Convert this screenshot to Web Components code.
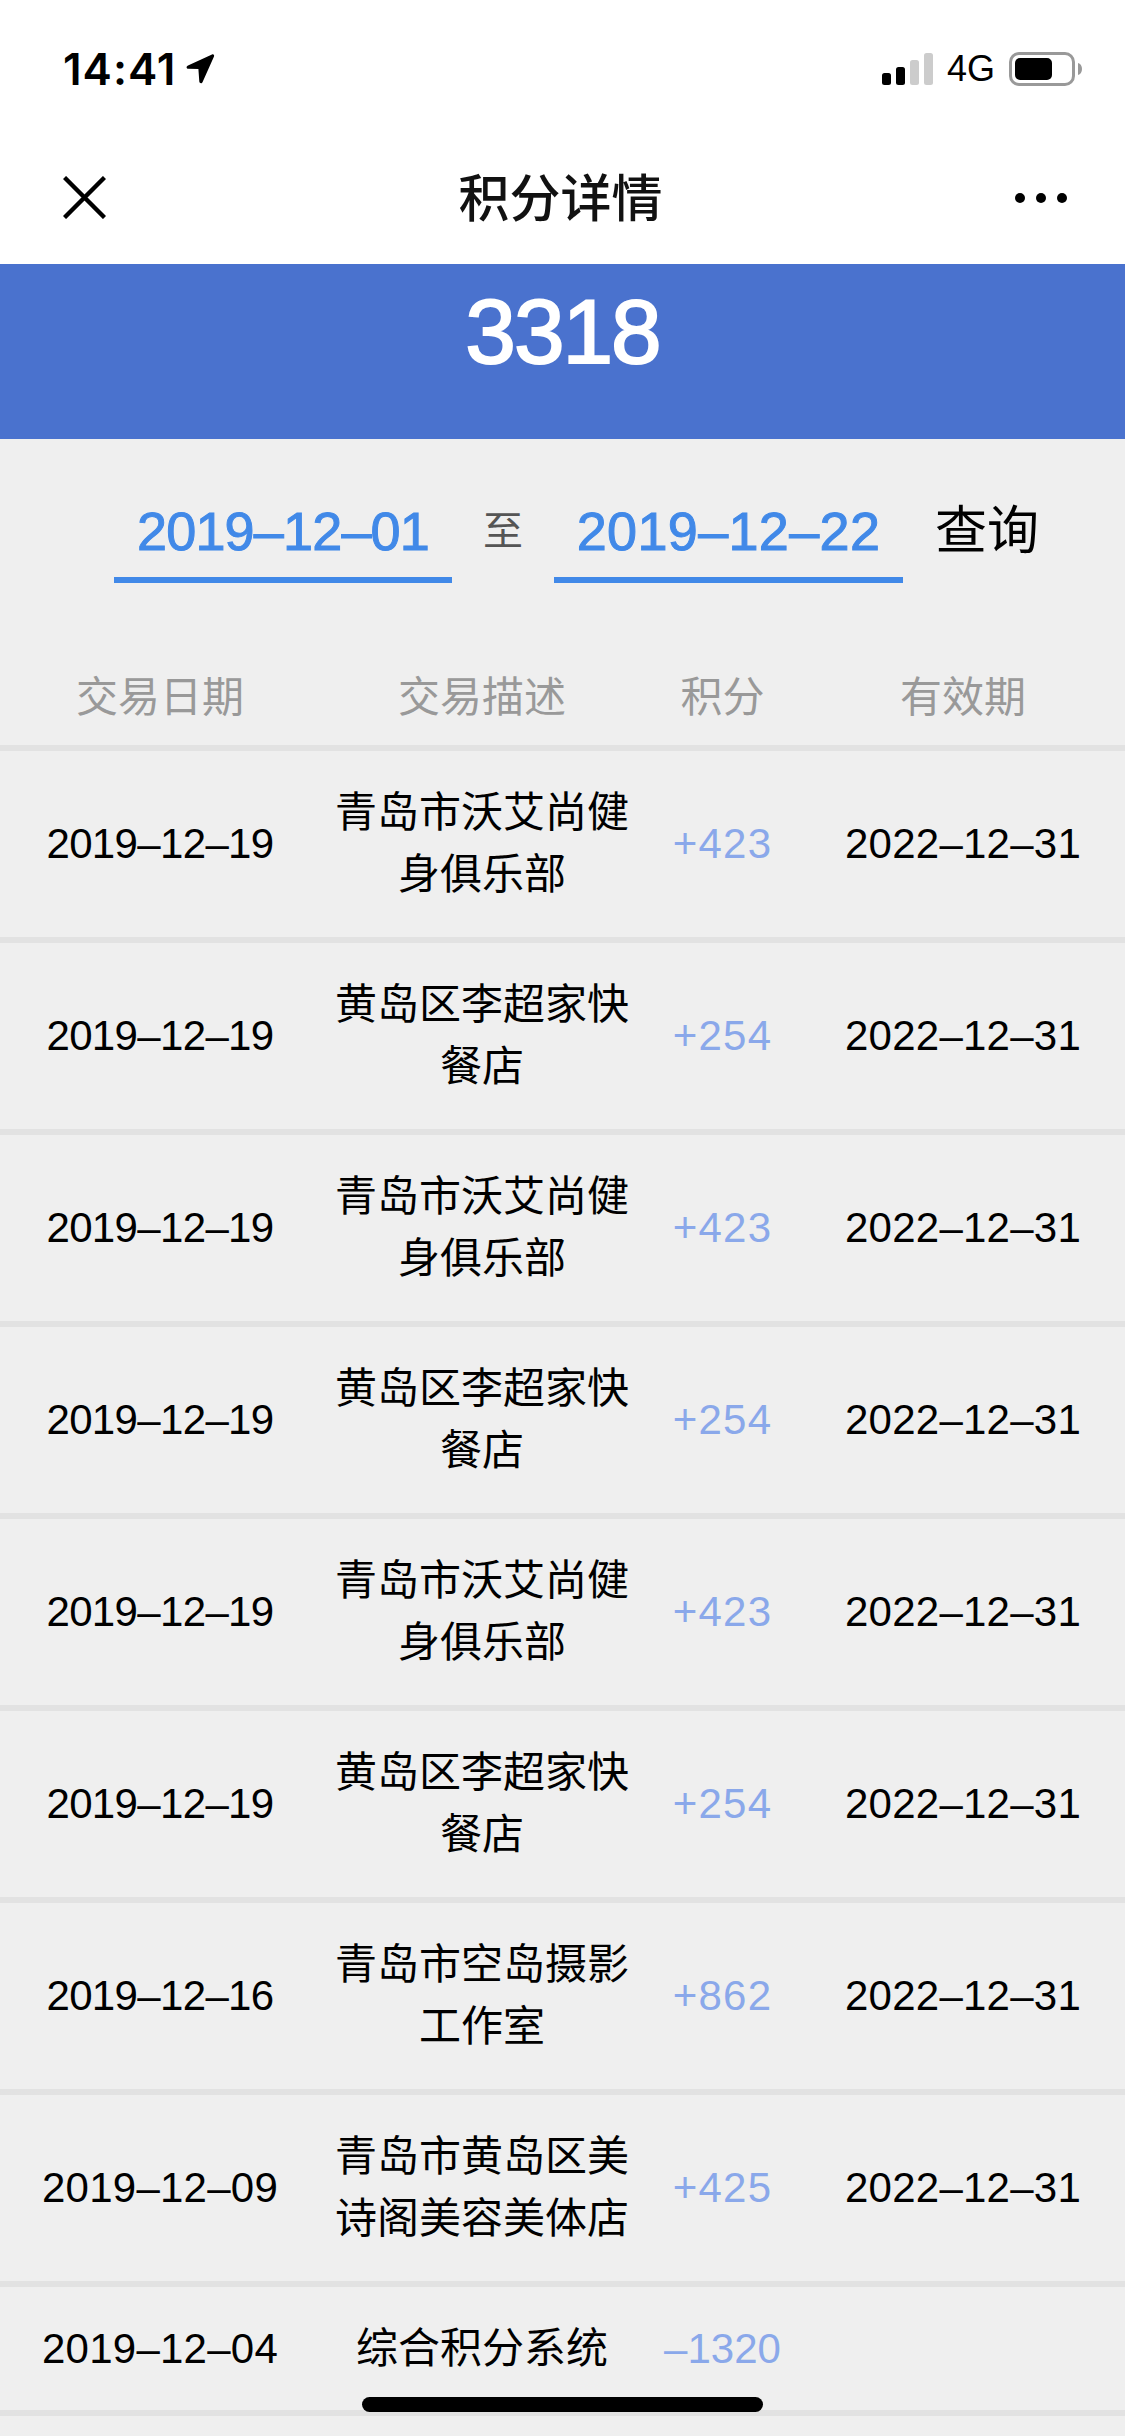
<!DOCTYPE html>
<html lang="zh-CN">
<head>
<meta charset="utf-8">
<title>积分详情</title>
<style>
  html, body { margin: 0; padding: 0; }
  body {
    width: 1125px; height: 2436px; overflow: hidden; position: relative;
    background: #efefef; color: #000;
    font-family: "Liberation Sans", "Noto Sans CJK SC", sans-serif;
  }
</style>
</head>
<body>
<points-page>
  <status-bar time="14:41"></status-bar>
  <nav-bar>积分详情</nav-bar>
  <points-balance>3318</points-balance>
  <date-filter from="2019–12–01" to="2019–12–22"></date-filter>
  <points-header></points-header>
  <points-row date="2019–12–19" desc="青岛市沃艾尚健身俱乐部" value="+423" expiry="2022–12–31"></points-row>
  <points-row date="2019–12–19" desc="黄岛区李超家快餐店" value="+254" expiry="2022–12–31"></points-row>
  <points-row date="2019–12–19" desc="青岛市沃艾尚健身俱乐部" value="+423" expiry="2022–12–31"></points-row>
  <points-row date="2019–12–19" desc="黄岛区李超家快餐店" value="+254" expiry="2022–12–31"></points-row>
  <points-row date="2019–12–19" desc="青岛市沃艾尚健身俱乐部" value="+423" expiry="2022–12–31"></points-row>
  <points-row date="2019–12–19" desc="黄岛区李超家快餐店" value="+254" expiry="2022–12–31"></points-row>
  <points-row date="2019–12–16" desc="青岛市空岛摄影工作室" value="+862" expiry="2022–12–31"></points-row>
  <points-row date="2019–12–09" desc="青岛市黄岛区美诗阁美容美体店" value="+425" expiry="2022–12–31"></points-row>
  <points-row class="short" date="2019–12–04" desc="综合积分系统" value="–1320" expiry=""></points-row>
  <home-indicator></home-indicator>
</points-page>

<script>
  // Small helper: every element gets an open shadow root from a markup string.
  function shell(host, html) {
    host.attachShadow({ mode: 'open' }).innerHTML = html;
    return host.shadowRoot;
  }

  function dateTracking(text, fontSize) {
    const ones = text.split('1').length - 1;
    const wanted = (254 - 9 * ones) * fontSize / 42;
    const natural = 0.556 * 10 * fontSize;
    return ((wanted - natural) / 10).toFixed(2) + 'px';
  }

  customElements.define('points-page', class extends HTMLElement {
    constructor() {
      super();
      shell(this, `<style>:host{display:flex;flex-direction:column;width:1125px}</style><slot></slot>`);
    }
  });

  customElements.define('status-bar', class extends HTMLElement {
    connectedCallback() {
      if (this.shadowRoot) return;
      shell(this, `<style>
        :host{display:flex;align-items:center;justify-content:space-between;box-sizing:border-box;
          height:98px;padding:39px 43px 0 63px;background:#fff}
        .l,.r{display:flex;align-items:center}
        .t{font:600 44px/50px Inter,"Liberation Sans",sans-serif;letter-spacing:1px}
        .l svg{margin-left:9px}
        .g{font:400 36px/40px "Liberation Sans",sans-serif;margin:0 14px}
      </style>
      <div class="l"><span class="t">${this.getAttribute('time')}</span>
        <svg width="30" height="31" viewBox="0 0 30 31"><path d="M27 1.5 3 12.5c-2.2 1-1.6 3.2.4 3.3l10 .3.9 12.4c.2 2 2.6 2.4 3.3.5L29 3.600c.6-1.600-.6-2.800-2-2.100Z" fill="#000"/></svg>
      </div>
      <div class="r">
        <svg width="51" height="32" viewBox="0 0 51 32">
          <rect x="0" y="20" width="9" height="12" rx="2.500" fill="#000"/>
          <rect x="14" y="14" width="9" height="18" rx="2.500" fill="#000"/>
          <rect x="28" y="7" width="9" height="25" rx="2.500" fill="#ccc"/>
          <rect x="42" y="0" width="9" height="32" rx="2.500" fill="#ccc"/>
        </svg>
        <span class="g">4G</span>
        <svg width="73" height="34" viewBox="0 0 73 34">
          <rect x="1.500" y="1.500" width="63" height="31" rx="8.500" fill="#fff" stroke="#999" stroke-width="3"/>
          <rect x="6" y="6" width="37" height="22" rx="5" fill="#000"/>
          <path d="M69 11c2.500.6 4 3 4 6s-1.500 5.400-4 6Z" fill="#999"/>
        </svg>
      </div>`);
    }
  });

  customElements.define('nav-bar', class extends HTMLElement {
    constructor() {
      super();
      shell(this, `<style>
        :host{display:flex;align-items:center;justify-content:space-between;box-sizing:border-box;
          height:166px;padding:32px 58px 0 63px;background:#fff}
        .title{font-size:51px;font-weight:500;color:#111;font-family:"Noto Sans CJK SC",sans-serif;line-height:66px;margin-top:-5px}
        svg{display:block}
        .more{margin-top:2px}
      </style>
      <svg width="43" height="43" viewBox="0 0 43 43"><path d="M1.500 1.500 41.500 41.500M41.500 1.500 1.500 41.500" stroke="#000" stroke-width="4.400" fill="none"/></svg>
      <span class="title"><slot></slot></span>
      <svg class="more" width="52" height="10" viewBox="0 0 52 10"><circle cx="5" cy="5" r="5"/><circle cx="26" cy="5" r="5"/><circle cx="47" cy="5" r="5"/></svg>`);
    }
  });

  customElements.define('points-balance', class extends HTMLElement {
    constructor() {
      super();
      shell(this, `<style>
        :host{display:flex;justify-content:center;box-sizing:border-box;height:175px;background:#4a72ce;color:#fff;
          font:400 91px/136px "Liberation Sans",sans-serif;letter-spacing:-2px;-webkit-text-stroke:2px #fff}
      </style><slot></slot>`);
    }
  });

  customElements.define('date-filter', class extends HTMLElement {
    connectedCallback() {
      if (this.shadowRoot) return;
      const from = this.getAttribute('from'), to = this.getAttribute('to');
      shell(this, `<style>
        :host{display:flex;align-items:flex-start;box-sizing:border-box;height:144px;padding:50px 0 0 114px}
        .f{box-sizing:border-box;height:94px;border-bottom:6px solid #4189e8;color:#4189e8;text-align:center;
          font-size:54px;line-height:84px;-webkit-text-stroke:1px #4189e8}
        .a{width:338px}
        .b{width:349px}
        .to{width:102px;text-align:center;font-size:40px;line-height:84px;color:#555}
        .go{margin-left:32px;font-size:52px;line-height:84px;color:#000}
      </style>
      <span class="f a" style="letter-spacing:${dateTracking(from, 54)}">${from}</span>
      <span class="to">至</span>
      <span class="f b" style="letter-spacing:${dateTracking(to, 54)}">${to}</span>
      <span class="go">查询</span>`);
    }
  });

  // Column widths are shared by the header and the record rows.
  const columns = 'grid-template-columns:320px 324px 157px 324px';

  customElements.define('points-header', class extends HTMLElement {
    constructor() {
      super();
      shell(this, `<style>
        :host{display:grid;${columns};box-sizing:border-box;height:168px;padding-top:67px;
          border-bottom:6px solid #e2e2e2;color:#999;font-size:42px;line-height:96px;text-align:center}
      </style>
      <span>交易日期</span><span>交易描述</span><span>积分</span><span>有效期</span>`);
    }
  });

  customElements.define('points-row', class extends HTMLElement {
    connectedCallback() {
      if (this.shadowRoot) return;
      const a = n => this.getAttribute(n);
      const valueTracking = a('value').length > 4 ? '0' : '1.200px';
      shell(this, `<style>
        :host{display:grid;${columns};align-items:center;box-sizing:border-box;height:192px;
          border-bottom:6px solid #e2e2e2;font-size:42px;text-align:center}
        :host(.short){height:129px}
        .desc{padding:0 15px;line-height:62px}
        .v{color:#8aa8ea}
      </style>
      <span style="letter-spacing:${dateTracking(a('date'), 42)}">${a('date')}</span>
      <span class="desc">${a('desc')}</span>
      <span class="v" style="letter-spacing:${valueTracking}">${a('value')}</span>
      <span style="letter-spacing:${dateTracking(a('expiry'), 42)}">${a('expiry')}</span>`);
    }
  });

  customElements.define('home-indicator', class extends HTMLElement {
    constructor() {
      super();
      shell(this, `<style>
        :host{position:absolute;left:362px;top:2397px;width:401px;height:15px;border-radius:8px;background:#000}
      </style>`);
    }
  });
</script>
</body>
</html>
